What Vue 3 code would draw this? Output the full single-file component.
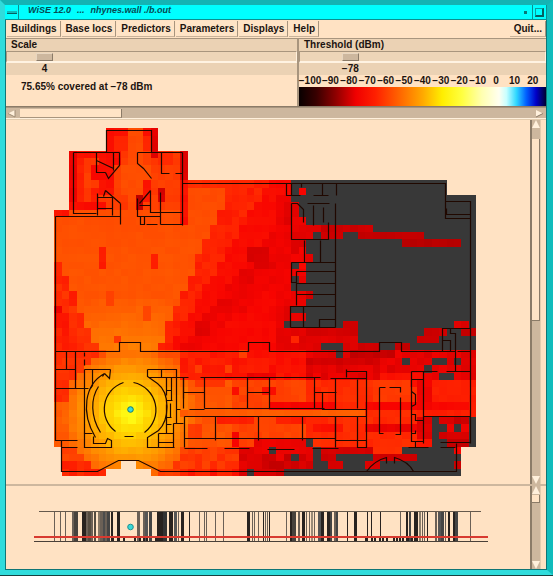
<script setup>
import { ref } from 'vue'

const menus = ['Buildings', 'Base locs', 'Predictors', 'Parameters', 'Displays', 'Help']
const ticks = ['−100', '−90', '−80', '−70', '−60', '−50', '−40', '−30', '−20', '−10', '0', '10', '20']
const scale = ref(4)
const threshold = ref(-78)
const along = (v, min, max) => ({ '--at': (v - min) / (max - min) })

// Coverage grid: 57 x 47 cells, transmitter near column 10, row 38.
const COLS = 57
const ROWS = 47
const CELL = 7.4
const X0 = 54.3
const Y0 = 128.3
const G = -1

const ramp = [
  [56, 56, 56], [165, 0, 0], [205, 0, 0], [248, 4, 0], [255, 36, 0], [255, 66, 0],
  [255, 92, 0], [255, 124, 0], [255, 156, 0], [255, 186, 0], [255, 218, 0], [255, 250, 20]
]
function color(v) {
  if (v === G) return '#383838'
  const t = Math.max(1, Math.min(11, v))
  const i = Math.min(10, Math.floor(t))
  const f = t - i
  return `rgb(${ramp[i].map((a, k) => Math.round(a + (ramp[i + 1][k] - a) * f)).join(',')})`
}
function noise(c, r) {
  const s = Math.sin(c * 12.9898 + r * 78.233) * 43758.5453
  return s - Math.floor(s)
}
function inside(c, r) {
  if (r < 3) return c >= 7 && c < 14
  if (r < 7) return c >= 2 && c < 18
  if (r < 9) return c >= 2 && c < 53
  if (r < 11) return c >= 2
  if (r < 43) return true
  if (r === 45 && (c === 9 || c === 10)) return false
  if (r === 46 && c >= 7 && c < 13) return false
  return c >= 1 && c < 55
}
function base(c, r) {
  const n = noise(c, r) - 0.5
  const dx = c + 0.5 - 10.2
  const dy = 38 - r
  const dist = Math.hypot(dx, dy)
  if (r < 11 && c < 18) return 4.8 + n * 0.5
  if (r < 30) {
    const t = dx / Math.max(1, dy)
    if (t > -0.5 && t < 0.44) return (dist < 16 ? 7.2 - (dist - 8) * 0.17 : 5.7 - Math.max(0, 20 - r) * 0.03) + n * 0.25
    if (t <= -0.5) return (t < -0.72 ? 3.7 : 4.3) + n * 0.9
    if (t < 0.6) return 3.9 + n * 0.6
    if (t < 0.78) return 3.2 + n * 0.3
    if (t < 1.1) return 2.8 + n * 0.3
    return 3.1 + n * 0.3 - Math.max(0, c - 27) * 0.04
  }
  if (dist < 8.8) return Math.max(6.3, 11.4 - dist * 0.58) + n * 0.3
  if (r < 34) return (c < 6 ? 4.4 : c < 17 ? 5.5 : c < 34 ? 3.8 - (c - 17) * 0.03 : 2.6) + n * 0.6
  if (r < 43) return (c < 6 ? (r < 37 ? 4.2 : 5.9) : c < 24 ? 5.7 : c < 34 ? 5 : c < 49 ? 4.2 : 3.7) + n * 0.5
  if (c < 7) return (r > 44 ? 4 : 5.2) + n * 0.9
  if (c < 17) return (r > 44 ? 4.7 : 5.8) + n * 0.6
  if (c < 25) return 4.6 + n * 1.2 - (r > 45 ? 1 : 0)
  if (c < 35) return 2.2 + n * 1.2
  return G
}

// Areas that differ from the propagation field: column, row, width, height, level.
const patches = [
  // north wing
  [7, 0, 7, 1, 3.4], [7, 0, 1, 3, 3.3], [8, 1, 2, 2, 4], [12, 1, 1, 2, 4], [13, 0, 1, 4, 2.5],
  [10, 0, 2, 11, 5.3], [9, 5, 4, 4, 5.4], [2, 3, 1, 8, 2.8], [3, 3, 4, 1, 3.3], [3, 4, 1, 6, 3.9],
  [17, 3, 1, 4, 2.4], [17, 7, 1, 6, 3.4], [5, 5, 3, 2, 3.2], [6, 7, 2, 2, 3.4], [5, 8, 1, 3, 3.8],
  [6, 3, 3, 2, 3.3], [12, 7, 1, 3, 3.5], [11, 9, 1, 2, 1.6], [14, 8, 1, 2, 2.2], [14, 3, 2, 2, 4.2],
  [0, 11, 2, 1, 3.5], [2, 10, 5, 1, 3.2], [18, 7, 6, 1, 4.2],
  // hall
  [6, 16, 1, 3, 3.7], [13, 17, 1, 2, 3.8], [7, 22, 1, 2, 5], [12, 24, 1, 2, 5.2], [8, 28, 1, 1, 4.7],
  [0, 18, 1, 3, 4], [1, 20, 1, 2, 3.9], [2, 22, 1, 2, 3.7], [0, 24, 1, 1, 2.8], [1, 25, 1, 3, 3.5],
  [26, 16, 3, 2, 2.3], [27, 18, 3, 1, 2.4], [25, 19, 2, 2, 2.5], [22, 23, 2, 2, 2.6], [19, 26, 2, 2, 2.5],
  // shadowed north-east block
  [32, 7, 25, 23, G], [33, 8, 1, 1, 3], [30, 9, 2, 18, 2.8], [31, 10, 2, 3, 2.4], [32, 12, 2, 2, 2.8],
  [33, 13, 5, 1, 2.5], [32, 14, 3, 1, 2.5], [36, 13, 3, 2, 2], [32, 15, 2, 2, 2.3], [33, 16, 1, 3, 3],
  [34, 17, 1, 1, 2.6], [32, 17, 2, 1, 2.8], [31, 19, 3, 1, 2.8], [33, 20, 1, 1, 2.7], [32, 22, 2, 2, 2.7],
  [34, 22, 1, 1, 2.1], [31, 24, 1, 3, 2.4], [32, 25, 2, 1, 2.7], [31, 26, 1, 1, G],
  [38, 13, 5, 1, 2], [41, 14, 9, 1, 1.8], [47, 15, 8, 1, 1.5],
  [30, 27, 8, 3, 2.5], [32, 28, 1, 1, 4.1], [34, 27, 5, 1, 2.2], [38, 28, 2, 2, 2.4], [39, 26, 2, 2, 2],
  [36, 29, 3, 1, G], [40, 28, 1, 2, 2.5], [41, 29, 3, 1, 2.1], [46, 29, 2, 1, 1.8],
  [50, 27, 3, 1, 2], [49, 28, 3, 1, 2.1], [54, 26, 2, 1, 2.4], [55, 27, 2, 1, 1.7],
  // corridor
  [34, 31, 10, 1, 2.1], [40, 30, 6, 1, 1.8], [38, 30, 1, 1, G], [47, 31, 1, 1, G], [51, 31, 2, 1, G],
  [54, 31, 1, 1, G], [50, 32, 1, 1, G], [52, 33, 2, 1, G], [55, 30, 2, 3, 2.5], [25, 30, 1, 1, 4.8],
  [19, 32, 1, 1, 4.8], [23, 32, 1, 1, 4.8], [26, 33, 4, 1, 2.7],
  // offices
  [24, 35, 1, 1, 3.2], [28, 35, 2, 1, 3.4], [19, 34, 4, 1, 4.5], [17, 38, 25, 1, 6], [29, 37, 9, 1, 3],
  [22, 39, 5, 1, 3.8], [30, 39, 4, 1, 3.8], [35, 40, 4, 1, 3.4], [24, 41, 1, 2, 3], [18, 40, 2, 2, 4.7],
  [27, 42, 8, 2, 2.7], [44, 33, 6, 2, 3.4], [42, 37, 7, 1, 3.1], [42, 40, 7, 1, 2.7], [43, 34, 5, 3, 4.7],
  [43, 42, 4, 2, 4.3], [49, 34, 2, 4, 2.8], [49, 39, 2, 3, 2.4], [51, 34, 6, 5, 3.8], [51, 37, 5, 1, 3.1],
  // south-east
  [51, 39, 6, 4, G], [52, 39, 2, 1, 2.4], [53, 40, 1, 1, 2.8], [55, 40, 1, 1, 2.8], [54, 39, 2, 1, 1.9],
  [52, 41, 4, 1, 2.2], [53, 42, 3, 1, 1.8], [54, 43, 1, 1, 3], [54, 45, 1, 1, 2], [36, 43, 7, 1, 2.2],
  [35, 44, 3, 1, 2], [37, 45, 2, 1, 2.2], [43, 44, 4, 1, 2], [46, 44, 3, 1, 2], [42, 45, 2, 1, 2.3],
  [34, 42, 1, 1, G], [29, 43, 1, 1, G], [32, 44, 1, 1, G], [35, 44, 1, 1, G], [26, 46, 1, 1, G], [31, 46, 4, 1, G]
]

const grid = []
for (let r = 0; r < ROWS; r++) {
  grid.push([])
  for (let c = 0; c < COLS; c++) grid[r].push(inside(c, r) ? base(c, r) : null)
}
for (const [c0, r0, w, h, v] of patches) {
  for (let r = r0; r < r0 + h && r < ROWS; r++) {
    for (let c = c0; c < c0 + w && c < COLS; c++) {
      if (grid[r][c] !== null) grid[r][c] = v === G ? G : v + (noise(c, r) - 0.5) * 0.25
    }
  }
}
const cells = []
grid.forEach((row, r) => row.forEach((v, c) => {
  if (v === null) return
  const x = Math.round(X0 + c * CELL)
  const y = Math.round(Y0 + r * CELL)
  cells.push({
    x, y, fill: color(v),
    w: Math.round(X0 + (c + 1) * CELL) - x,
    h: Math.round(Y0 + (r + 1) * CELL) - y
  })
}))

const walls = [
  // north wing
  'M106 152V130H151V152M73 152H119M137 152H182M73 152V213H96M182 152V225M55 216H120M120 203V224',
  'M96 152V172H105M113 152V170M119 152V165L108 178L105 172M96 160L113 168M137 152V163L143 168L151 178',
  'M161 152V173H169M175 173H182M105 190L120 203M105 190L103 196M97 193V215M97 197H112V215M97 208H112',
  'M150 190L139 203M150 190V212H182M139 205H150M137 198V216H160M160 192V224M140 216V224H144V216M146 224H157M160 224H182',
  // north-east block
  'M182 183H445V218H470M445 201H470V443M446 208V214H470M286 183V195H300M291 183V195M301 183V187M313 195H328M322 183V195M336 183V195',
  'M291 203V239H328V222M291 203H297L303 209V222M307 203H329M313 205V225M323 207V222M335 203V327',
  'M304 240V262M320 240V262M291 262H335M291 262V282H296M296 271H335M296 271V305M296 283H335M296 294H335M290 327V306H335M290 327H335M303 306V327M319 327V319H335',
  // outline and corridor
  'M55 216V440H77M61 440V471H97L118 460H138L160 471H456V443M61 447H77',
  'M55 351H119V342H140V351H248V342H269V351H379V342H401V351H455M442 351V328H470M442 340H450V351M450 328V333H455V371M457 351H470',
  'M55 369H75M55 388H88M66 351V369M75 351V388M84 352V356M84 359V365M84 369V433H92M84 369H110M92 369V385L90 388',
  // rotunda
  'M123 382A28 28 0 0 0 115 431M133 382A28 28 0 0 1 144 432M124 436H133',
  'M98 386C90 398 90 416 100 432M104 373C84 384 80 412 95 437M104 373L109 378L110 369M104 373L102 376',
  'M84 433V447H111V440L107 438L105 443H93V436',
  'M147 369H176V377M147 369V376L157 383C170 393 169 419 158 430L147 437V447H174M149 377H186M161 369V377',
  'M166 377V395M171 377V400M166 390H171M166 400H172M176 377V423M166 404V417H170V403M166 408V433M166 417H171M166 424H171M173 423H183M173 423V447M176 409H180M183 377V398M158 433H173M158 433V447M158 442H173',
  // offices
  'M183 377H188M200 377H320M183 377V408M183 392H204M204 377V408M189 409H204M204 408H324M247 377V408M269 377V408M247 392H269M314 377V408M314 392H336M322 392V409H366M335 378V409M330 378H366',
  'M184 416H335V447M184 416V447M184 438H335M215 416V440M258 416V440M302 416V440M184 448H207M224 448H249M267 449H294M312 448H338',
  'M346 377V369M346 371H366V447H357V416M357 379V408M335 416H366M335 440H366M335 416V440M379 387H385M389 387H400V392M379 387V433H383M395 434H400V397',
  'M411 371H437M411 371V441H423M423 371V443M411 379H423M411 391L415 394V404L411 406M411 414H415V420H423M411 433H415V430M423 416H470M446 371H470M408 447H428M415 441V447M440 447H455M440 442H470',
  'M366 471Q374 460 386 457V463M394 463V457Q408 461 413 471'
]

// Wall positions in the side elevation: x, width, shade.
const D = '#28221f'
const M = '#6b6056'
const posts = [
  [54, 1, M], [60, 1, M], [65, 1, M], [72, 2, M], [74, 4, '#47423d'], [82, 4, D], [86, 2, M], [88, 3, '#544b40'],
  [91, 2, M], [94, 2, '#544b40'], [98, 2, '#857766'], [100, 3, M], [103, 2, '#4c4c4c'], [105, 2, M], [107, 3, '#444'],
  [111, 2, D], [117, 3, D], [137, 3, M], [143, 2, M], [145, 3, '#555'], [149, 3, '#444'], [157, 6, D], [163, 4, '#333'],
  [169, 4, D], [174, 3, '#555'], [178, 1, M], [181, 3, D], [189, 1, D], [199, 1, M], [204, 1, M], [206, 1, M],
  [215, 1, M], [223, 1, M], [247, 3, D], [252, 1, M], [254, 1, M], [258, 1, M], [263, 1, D], [265, 1, M], [267, 1, M],
  [269, 1, D], [286, 1, M], [290, 2, D], [292, 4, '#47423d'], [298, 2, M], [302, 3, D], [306, 1, M], [309, 1, M],
  [311, 2, '#9a8b78'], [314, 1, M], [318, 3, '#555'], [321, 3, D], [327, 3, D], [330, 2, '#444'], [334, 2, M], [336, 2, '#444'],
  [347, 1, D], [354, 3, D], [367, 1, D], [371, 1, D], [380, 1, D], [400, 1, M], [406, 2, D], [409, 2, '#444'],
  [414, 4, D], [419, 2, '#8c7e6c'], [422, 1, M], [424, 1, M], [427, 1, D], [435, 2, M], [438, 3, '#555'], [441, 3, '#444'],
  [445, 1, M], [448, 2, D], [453, 2, D], [455, 3, '#444'], [470, 1, M]
]
const footings = [112, 117, 123, 134, 139, 143, 146, 155, 365, 371, 374, 379, 382, 386, 393, 396, 399, 402, 407, 411, 416]
</script>

<template>
  <main class="window">
    <header class="titlebar">
      <button class="sys" aria-label="Window menu"><i></i></button>
      <h1><span>WiSE 12.0</span><span>...</span><span>nhynes.wall ./b.out</span></h1>
      <button class="min" aria-label="Minimize"><i></i></button>
      <button class="max" aria-label="Maximize"><i></i></button>
    </header>

    <nav class="menubar">
      <button v-for="m in menus" :key="m">{{ m }}</button>
      <button class="quit">Quit...</button>
    </nav>

    <section class="controls">
      <div class="left">
        <div class="slider">
          <label for="scale">Scale</label>
          <input id="scale" v-model.number="scale" type="range" min="1" max="29">
          <div class="reading" :style="along(scale, 1, 29)"><output for="scale">{{ scale }}</output></div>
        </div>
        <p>75.65% covered at −78 dBm</p>
      </div>
      <div class="right">
        <div class="slider">
          <label for="threshold">Threshold (dBm)</label>
          <input id="threshold" v-model.number="threshold" type="range" min="-100" max="20">
          <div class="reading" :style="along(threshold, -100, 20)"><output for="threshold">{{ String(threshold).replace('-', '−') }}</output></div>
        </div>
        <div class="ticks"><span v-for="t in ticks" :key="t">{{ t }}</span></div>
        <div class="ramp"></div>
      </div>
    </section>

    <div class="hscroll">
      <svg width="9" height="9" viewBox="0 0 18 18"><path d="M2 9L16 2V16Z" fill="#fff0dc" /><path d="M2 9L16 16V2" fill="none" stroke="#a08c74" stroke-width="2" /></svg>
      <div class="hbar"></div>
      <svg width="9" height="9" viewBox="0 0 18 18"><path d="M16 9L2 2V16Z" fill="#fff0dc" /><path d="M2 16L16 9" stroke="#8b7a66" stroke-width="2" /></svg>
    </div>

    <section class="pane">
      <svg class="plan" viewBox="6 120 524 364" role="img" aria-label="Coverage plan">
        <g shape-rendering="crispEdges">
          <rect v-for="(c, i) in cells" :key="i" :x="c.x" :y="c.y" :width="c.w" :height="c.h" :fill="c.fill" />
        </g>
        <g transform="translate(0.5 0.5)" fill="none" stroke="#200800" stroke-width="1.2">
          <path v-for="(d, i) in walls" :key="i" :d="d" />
        </g>
        <circle cx="130.5" cy="409.5" r="2.8" fill="#38d8d8" stroke="#167878" />
      </svg>
      <div class="vscroll"><span class="up"></span><div class="vbar tall"></div><span class="down"></span></div>
    </section>

    <section class="pane elevation">
      <svg class="plan" viewBox="6 486 524 83" role="img" aria-label="Side elevation">
        <g shape-rendering="crispEdges">
          <rect v-for="(p, i) in posts" :key="i" :x="p[0]" y="512" :width="p[1]" height="30" :fill="p[2]" />
          <rect v-for="x in footings" :key="'f' + x" :x="x" y="537" width="2" height="5" fill="#28221f" />
          <rect x="39" y="511" width="442" height="1" fill="#65594c" />
          <rect x="34" y="541" width="454" height="1" fill="#4a4038" />
          <rect x="34" y="536" width="454" height="2" fill="#d83a30" />
        </g>
        <circle cx="130.5" cy="527" r="2.8" fill="#38d8d8" stroke="#209090" />
      </svg>
      <div class="vscroll"><span class="up"></span><div class="vbar short"></div><span class="down"></span></div>
    </section>
  </main>
</template>

<style>
body {
  background: #17403f;
}
</style>

<style scoped>
* {
  box-sizing: border-box;
}
.window {
  background: #ffe2c3;
  border: 5px solid #30dcdc;
  border-top-color: #14b4b4;
  border-right: 6px solid #10bcbc;
  box-shadow: inset 0 0 0 1px #0f7676;
  padding: 1px;
  font: bold 10px/12px "Liberation Sans", Arial, sans-serif;
  color: #1c1410;
}
button {
  font: inherit;
  color: inherit;
  margin: 0;
  padding: 0;
  border: 0;
}
.titlebar {
  display: flex;
  height: 15px;
  background: #00ffff;
  border-bottom: 1px solid #0a9090;
  margin: -1px -1px 0;
}
.titlebar h1 {
  flex: 1;
  display: flex;
  gap: 6px;
  margin: 0;
  padding-left: 9px;
  font: italic bold 9px/11px "Liberation Sans", Arial, sans-serif;
  color: #064a52;
}
.titlebar button {
  display: flex;
  align-items: center;
  justify-content: center;
  width: 14px;
  background: #00ffff;
  border-right: 1px solid #0a9090;
}
.sys i {
  width: 10px;
  height: 3px;
  background: #10b8b8;
  border-bottom: 1px solid #056060;
}
.min i {
  width: 3px;
  height: 3px;
  background: #067878;
}
.max i {
  width: 9px;
  height: 9px;
  border: 1px solid #08a0a0;
  border-right: 2px solid #056060;
  border-bottom: 2px solid #056060;
}
.menubar {
  display: flex;
  gap: 1px;
  height: 19px;
  padding: 1px 0 1px 1px;
  border-bottom: 1px solid #a8957e;
}
.menubar button {
  padding: 0 3px 0 4px;
  background: #ffe4c6;
  border-right: 1px solid #a8957e;
  border-bottom: 1px solid #c9b39a;
}
.menubar .quit {
  margin-left: auto;
}
.controls {
  display: grid;
  grid-template-columns: 291fr 249fr;
  border-bottom: 1px solid #8b7b68;
}
.slider {
  background: #ebd2b4;
}
.slider label {
  display: block;
  padding-left: 5px;
}
.slider input {
  display: block;
  appearance: none;
  width: 100%;
  height: 12px;
  margin: 0;
  background: #edd5b8;
  border: 1px solid #a8957e;
  border-right-color: #fff0dc;
  border-bottom: 2px solid #fff3e2;
}
.slider input::-webkit-slider-thumb {
  appearance: none;
  width: 17px;
  height: 8px;
  background: #cdb79e;
  border: 1px solid #e8d6c0;
  border-right-color: #8b7b68;
  border-bottom-color: #8b7b68;
}
.reading {
  height: 12px;
  padding: 0 8px;
}
.reading output {
  display: block;
  width: 30px;
  margin-left: calc(100% * var(--at) - 14px);
  text-align: center;
}
.left p {
  margin: 0;
  padding: 6px 15px;
}
.right {
  display: flex;
  flex-direction: column;
  border-left: 2px solid #a8957e;
}
.ticks {
  display: flex;
  justify-content: space-between;
  padding-right: 4px;
  background: #ffe2c3;
}
.ticks span {
  display: flex;
  justify-content: center;
  width: 18px;
  white-space: nowrap;
}
.ticks span:first-child {
  width: 22px;
}
.ramp {
  height: 19px;
  background: linear-gradient(90deg, #080000 0%, #380000 7%, #900000 15%, #f00000 23%, #ff2000 31%, #ff6000 40%, #ffa800 50%, #ffee00 58%, #ffff40 66%, #ffffb0 74%, #fffff0 81%, #c8ffff 84%, #30d8ff 88%, #0060ff 92%, #0000c8 96%, #000030 100%);
}
.hscroll {
  display: flex;
  align-items: center;
  height: 12px;
  padding: 0 2px 0 1px;
  background: #cdb79e;
  border-top: 1px solid #a8957e;
  border-bottom: 1px solid #fff0dc;
}
.hbar {
  width: 19%;
  height: 9px;
  margin: 0 auto 0 4px;
  background: #ffe4c6;
  border-right: 1px solid #8b7b68;
  border-bottom: 1px solid #a8957e;
}
.pane {
  display: grid;
  grid-template-columns: 1fr 16px;
  border-top: 1px solid #e3ccae;
}
.elevation {
  border-top: 2px solid #cdb79e;
}
.plan {
  display: block;
  width: 100%;
}
.vscroll {
  display: flex;
  flex-direction: column;
  align-items: center;
  width: 11px;
  background: #cdb79e;
  border-left: 2px solid #8b7b68;
  border-right: 1px solid #e3ccae;
}
.vbar {
  width: 8px;
  background: #ffe4c6;
  border-right: 1px solid #8b7b68;
  border-bottom: 1px solid #8b7b68;
}
.tall {
  flex: 0 0 50%;
  margin: 11px 0 auto;
}
.short {
  flex: 0 0 8px;
  margin: 1px 0 auto;
}
.up,
.down {
  width: 8px;
  height: 8px;
  background: #fff0dc;
}
.up {
  clip-path: polygon(50% 0, 100% 100%, 0 100%);
}
.down {
  clip-path: polygon(0 0, 100% 0, 50% 100%);
}
</style>
